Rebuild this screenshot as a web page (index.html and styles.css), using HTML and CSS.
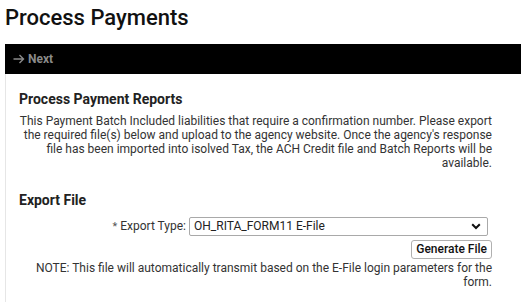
FILE: index.html
```html
<!DOCTYPE html>
<html>
<head>
<meta charset="utf-8">
<link rel="stylesheet" href="styles.css">
</head>
<body>
<h1 class="title">Process Payments</h1>
<div class="toolbar"><span class="next"><svg class="arrow" width="12" height="10" viewBox="0 0 12 10"><path d="M0.5 5 H10.5 M6.5 1 L10.5 5 L6.5 9" fill="none" stroke="#8a8a8a" stroke-width="1.4"/></svg>Next</span></div>
<div class="panel">
  <h2 class="section-title first">Process Payment Reports</h2>
  <p class="desc">This Payment Batch Included liabilities that require a confirmation number. Please export the required file(s) below and upload to the agency website. Once the agency's response file has been imported into isolved Tax, the ACH Credit file and Batch Reports will be available.</p>
  <h2 class="section-title second">Export File</h2>
  <div class="form-row">
    <label class="label"><span class="req">*</span> Export Type:</label>
    <div class="select">
      <span>OH_RITA_FORM11 E-File</span>
      <svg class="chev" width="10" height="7" viewBox="0 0 10 7"><path d="M1.2 1.2 L5 5 L8.8 1.2" fill="none" stroke="#111" stroke-width="2"/></svg>
    </div>
  </div>
  <div class="btn-row"><button class="btn">Generate File</button></div>
  <p class="desc note">NOTE: This file will automatically transmit based on the E-File login parameters for the form.</p>
</div>
</body>
</html>
```
FILE: styles.css
```css
html, body { margin: 0; padding: 0; background: #fff; }
body { padding: 0 8px 0 5px; font-family: Roboto, "Liberation Sans", sans-serif; color: #222; }
.title { margin: 0; padding-top: 5px; height: 38px; font-size: 22px; font-weight: 500; color: #111; line-height: 26px; }
.toolbar { background: #000; height: 30px; display: flex; align-items: center; padding-left: 8px; margin-top: 0.5px; }
.next { color: #8a8a8a; font-weight: 700; font-size: 12px; display: flex; align-items: center; gap: 3px; }
.panel { border-left: 1px solid #e6e6e6; padding: 17px 29px 0 13px; height: 211px; }
.section-title { margin: 0; font-size: 14px; font-weight: 700; line-height: 17px; color: #222; }
.desc { margin: 6px 0 0 0; font-size: 12px; line-height: 14px; text-align: right; color: #333; }
.second { margin-top: 22px; }
.form-row { display: flex; justify-content: flex-end; align-items: center; margin-top: 8px; padding-right: 4px; gap: 3px; }
.label { font-size: 12px; color: #333; }
.req { color: #555; font-size: 11px; }
.select { width: 287px; height: 17px; border: 1px solid #a9a9a9; border-radius: 2px; display: flex; align-items: center; justify-content: space-between; padding: 0 6px 0 4px; font-size: 12px; color: #222; }
.btn-row { display: flex; justify-content: flex-end; margin-top: 4px; }
.btn { font-family: Roboto, "Liberation Sans", sans-serif; font-size: 12px; font-weight: 500; color: #111; background: #fff; border: 1px solid #b0b0b0; border-radius: 3px; height: 19px; padding: 0 4px; line-height: 15px; }
.note { margin-top: 2px; }
```
